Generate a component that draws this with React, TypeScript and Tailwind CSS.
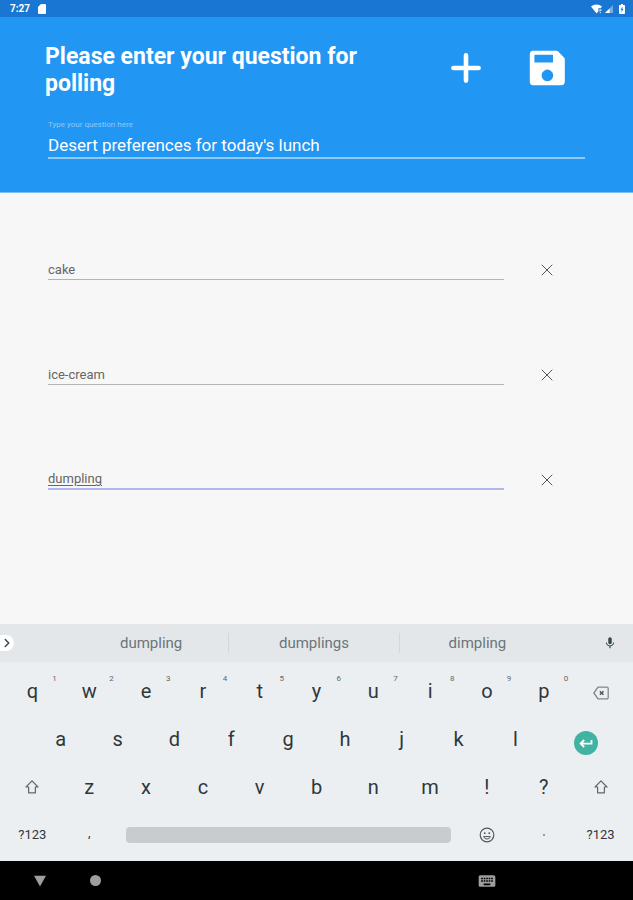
import type { ReactNode } from "react";
import { ChevronRight, X } from "lucide-react";
import { MdKeyboard, MdMic } from "react-icons/md";

type KeyProps = {
  label: string;
  hint?: string;
  className?: string;
  children?: ReactNode;
};

const options = ["cake", "ice-cream", "dumpling"];
const suggestions = ["dumpling", "dumplings", "dimpling"];
const topRow = ["q", "w", "e", "r", "t", "y", "u", "i", "o", "p"];
const middleRow = ["a", "s", "d", "f", "g", "h", "j", "k", "l"];
const bottomRow = ["z", "x", "c", "v", "b", "n", "m", "!", "?"];

function StatusBar() {
  return (
    <div className="flex h-[17px] items-center justify-between bg-[#1976d2] pl-2.5 pr-2 text-white">
      <div className="flex items-center gap-2">
        <span className="text-[10px] leading-4 font-bold">7:27</span>
        <svg viewBox="0 0 8 10" className="h-2.5 w-2" fill="currentColor">
          <path d="M3 0h4a1 1 0 0 1 1 1v8a1 1 0 0 1-1 1H1a1 1 0 0 1-1-1V3z" />
        </svg>
      </div>
      <div className="flex items-center gap-0.5">
        <svg viewBox="0 0 12 10" className="h-2.5 w-3" fill="currentColor">
          <path d="M0 2.6C3-.2 8-.2 11 2.6L9.6 4.3H7.4v3L5.6 9.4z" />
          <path d="M8.4 5.4h2.2v1.2H9.5v1h-1z M8.8 8.2h1v1h-1z" />
        </svg>
        <svg viewBox="0 0 8 8" className="h-2 w-2" fill="currentColor">
          <path d="M0 8 8 0v8z" opacity=".4" />
          <path d="M0 8 4.6 3.4V8z" />
        </svg>
        <svg viewBox="0 0 6 10" className="ml-1 h-2.5 w-1.5" fill="currentColor">
          <path
            fillRule="evenodd"
            d="M2 0h2v1h1.4l.6.6V9.4l-.6.6H.6L0 9.4V1.6L.6 1H2zM3.4 2.6 1.6 5.8h1v2.4l1.8-3.3h-1z"
          />
        </svg>
      </div>
    </div>
  );
}

function OptionRow({ value, active }: { value: string; active: boolean }) {
  return (
    <li className="flex h-[105px] items-center">
      <input
        type="text"
        aria-label={`Option ${value}`}
        defaultValue={value}
        className={
          active
            ? "h-5 min-w-0 flex-1 border-b-2 border-[#b0b9ee] bg-transparent text-[13px] text-[#666] underline underline-offset-2 outline-none"
            : "h-5 min-w-0 flex-1 border-b border-[#b4b4b4] bg-transparent text-[13px] text-[#666] outline-none"
        }
      />
      <button
        type="button"
        aria-label={`Remove ${value}`}
        className="ml-[31px] flex h-6 w-6 items-center justify-center text-[#555]"
      >
        <X className="h-5 w-5" strokeWidth={1.2} />
      </button>
    </li>
  );
}

function Key({ label, hint, className = "col-span-2", children }: KeyProps) {
  return (
    <button
      type="button"
      aria-label={label}
      className={`relative flex h-12 items-center justify-center text-xl text-[#2f373b] ${className}`}
    >
      {children ?? label}
      {hint && (
        <span className="absolute top-1.5 right-1 text-[8px] leading-3 text-[#5f676b]">
          {hint}
        </span>
      )}
    </button>
  );
}

function ShiftIcon() {
  return (
    <svg
      viewBox="0 0 16 16"
      className="h-4 w-4"
      fill="none"
      stroke="#5f676b"
      strokeWidth="1.2"
      strokeLinejoin="round"
    >
      <path d="M8 1.8 14 8h-2.6v5.8H4.6V8H2z" />
    </svg>
  );
}

function BackspaceIcon() {
  return (
    <svg
      viewBox="0 0 16 14"
      className="h-3.5 w-4"
      fill="none"
      stroke="#7f888c"
      strokeWidth="1.3"
      strokeLinejoin="round"
    >
      <path d="M5 1.2h9a1.2 1.2 0 0 1 1.2 1.2v9.2a1.2 1.2 0 0 1-1.2 1.2H5L.9 7z" />
      <path d="m6.9 5.2 3.6 3.6M10.5 5.2 6.9 8.8" stroke="#4f575b" strokeWidth="1.5" />
    </svg>
  );
}

function EmojiIcon() {
  return (
    <svg viewBox="0 0 16 16" className="h-4 w-4" fill="none" stroke="#4f575b">
      <circle cx="8" cy="8" r="6.8" strokeWidth="1.2" />
      <path d="M4.6 9.6c1.2 3.2 5.6 3.2 6.8 0z" strokeWidth="1" />
      <circle cx="5.7" cy="6.2" r=".9" fill="#4f575b" stroke="none" />
      <circle cx="10.3" cy="6.2" r=".9" fill="#4f575b" stroke="none" />
    </svg>
  );
}

function Keyboard() {
  return (
    <section aria-label="Keyboard" className="bg-[#eceff1]">
      <div className="flex h-[38px] items-center bg-[#e4e7e9]">
        <button
          type="button"
          aria-label="More suggestions"
          className="flex h-4 w-3.5 items-center justify-center rounded-r-full bg-white text-[#37474f]"
        >
          <ChevronRight className="h-3.5 w-3.5" strokeWidth={2.5} />
        </button>
        <div className="mr-12 ml-[60px] grid flex-1 grid-cols-[10fr_11fr_10fr] divide-x divide-[#d3d7d9]">
          {suggestions.map((word) => (
            <button
              key={word}
              type="button"
              className="h-5 text-[15px] leading-5 text-[#6b7579]"
            >
              {word}
            </button>
          ))}
        </div>
        <button type="button" aria-label="Voice input" className="mr-4 text-[#37474f]">
          <MdMic className="h-3.5 w-3.5" />
        </button>
      </div>

      <div className="grid grid-cols-[repeat(22,minmax(0,1fr))] px-1 pt-[5px] pb-0.5">
        {topRow.map((letter, i) => (
          <Key key={letter} label={letter} hint={String((i + 1) % 10)} />
        ))}
        <Key label="Backspace" className="col-span-2 pt-1">
          <BackspaceIcon />
        </Key>

        {middleRow.map((letter) => (
          <Key
            key={letter}
            label={letter}
            className={letter === "a" ? "col-span-2 col-start-2" : "col-span-2"}
          />
        ))}
        <Key label="Enter" className="col-span-3 pt-2">
          <span className="flex h-6 w-6 items-center justify-center rounded-full bg-[#41b3a3]">
            <svg viewBox="0 0 16 16" className="h-4 w-4" fill="none" stroke="#fff" strokeWidth="1.8">
              <path d="M13.5 5v3.6H3M6.2 5 2.6 8.6l3.6 3.6" />
            </svg>
          </span>
        </Key>

        <Key label="Left shift">
          <ShiftIcon />
        </Key>
        {bottomRow.map((letter) => (
          <Key key={letter} label={letter} />
        ))}
        <Key label="Right shift">
          <ShiftIcon />
        </Key>

        <Key label="Symbols">
          <span className="text-[13px]">?123</span>
        </Key>
        <Key label="," className="col-span-2 pb-1">
          <span className="text-[13px]">,</span>
        </Key>
        <Key label="Space" className="col-span-12 px-2">
          <span className="h-4 w-full rounded-sm bg-[#c8cccf]" />
        </Key>
        <Key label="Emoji">
          <EmojiIcon />
        </Key>
        <Key label="Period">
          <span className="h-0.5 w-0.5 rounded-full bg-[#7b8387]" />
        </Key>
        <Key label="More symbols">
          <span className="text-[13px]">?123</span>
        </Key>
      </div>
    </section>
  );
}

function NavigationBar() {
  return (
    <nav className="grid h-[39px] grid-cols-[repeat(22,minmax(0,1fr))] items-center bg-black px-1 text-[#9e9e9e]">
      <button type="button" aria-label="Back" className="col-span-2 flex justify-center pl-4">
        <svg viewBox="0 0 14 12" className="h-3 w-3.5" fill="currentColor">
          <path d="M1 .8h12L7 11.6z" />
        </svg>
      </button>
      <button type="button" aria-label="Home" className="col-span-2 flex justify-center pl-3">
        <span className="h-[11px] w-[11px] rounded-full bg-[#9e9e9e]" />
      </button>
      <button
        type="button"
        aria-label="Switch keyboard"
        className="col-span-2 col-start-17 flex justify-center"
      >
        <MdKeyboard className="h-5 w-5" />
      </button>
    </nav>
  );
}

export default function App() {
  return (
    <div className="flex min-h-screen flex-col bg-[#f7f7f7] font-['Roboto',sans-serif]">
      <StatusBar />

      <header className="border-b border-[#7cc0f8] bg-[#2196f3] px-12 pt-[26px] pb-[33px] text-white">
        <div className="flex items-start justify-between">
          <h1 className="-ml-[3px] max-w-[330px] text-[23px] leading-[27px] font-bold">
            Please enter your question for polling
          </h1>
          <div className="flex gap-[45px] pt-[7px] pr-5">
            <button type="button" aria-label="Add option">
              <svg
                viewBox="0 0 36 36"
                className="h-9 w-9"
                stroke="currentColor"
                strokeWidth="4.6"
                strokeLinecap="round"
              >
                <path d="M18 5.4v25.2M5.4 18h25.2" />
              </svg>
            </button>
            <button type="button" aria-label="Save poll">
              <svg viewBox="0 0 36 36" className="h-9 w-9" fill="currentColor">
                <path
                  fillRule="evenodd"
                  d="M4 .8h23.4q1 0 1.8.8l5.8 5.8q.8.8.8 1.8V31.600q0 3.600-3.600 3.600H4Q.8 35.200.8 31.600V4.400Q.8.8 4 .8zM5.400 4.800v7.600h18.600V4.800zM18.400 19.600a5.800 5.800 0 1 0 .01 0z"
                />
              </svg>
            </button>
          </div>
        </div>
        <label htmlFor="question" className="mt-[22px] block text-[8px] leading-3 text-[#90caf9]">
          Type your question here
        </label>
        <input
          id="question"
          type="text"
          defaultValue="Desert preferences for today's lunch"
          className="mt-1 block h-6 w-full border-b-2 border-[#90caf9] bg-transparent text-[17px] outline-none"
        />
      </header>

      <main className="flex-1 pt-6 pr-[74px] pl-12">
        <ul>
          {options.map((value) => (
            <OptionRow key={value} value={value} active={value === "dumpling"} />
          ))}
        </ul>
      </main>

      <Keyboard />
      <NavigationBar />
    </div>
  );
}
